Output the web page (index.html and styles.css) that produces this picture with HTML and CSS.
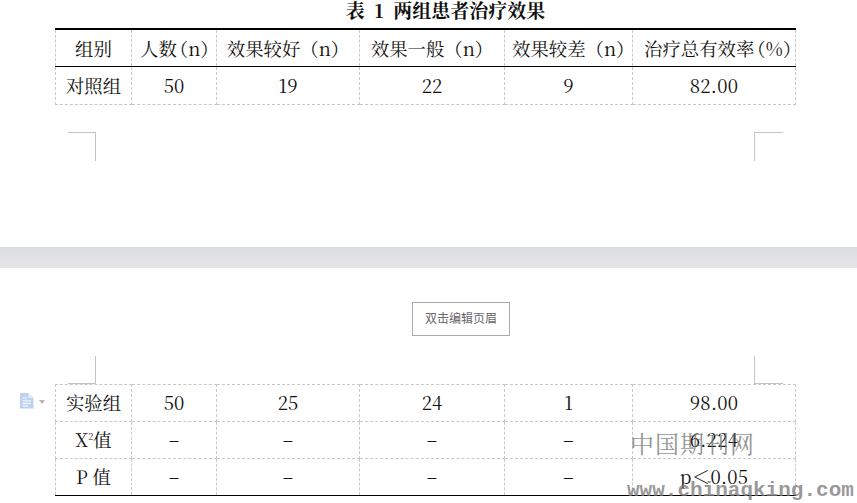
FILE: index.html
```html
<!DOCTYPE html>
<html lang="zh">
<head>
<meta charset="utf-8">
<title>表 1 两组患者治疗效果</title>
<link rel="stylesheet" href="styles.css">
</head>
<body>
<main class="doc">
  <section class="page page-top">
    <h1 class="caption">表 1 两组患者治疗效果</h1>
    <table class="data head-table">
      <colgroup><col class="c1"><col class="c2"><col class="c3"><col class="c4"><col class="c5"><col class="c6"></colgroup>
      <tr class="head-row"><td>组别</td><td class="pad-n">人数<span class="open">（</span>n<span class="close">）</span></td><td>效果较好（n）</td><td>效果一般（n）</td><td class="pad-d">效果较差（n）</td><td class="pad-r">治疗总有效率<span class="open">（</span>%<span class="close">）</span></td></tr>
      <tr class="first-data"><td>对照组</td><td>50</td><td>19</td><td>22</td><td>9</td><td class="num">82.00</td></tr>
    </table>
    <span class="mark tl"></span><span class="mark tr"></span>
  </section>
  <div class="page-gap"></div>
  <section class="page page-bottom">
    <button class="header-btn" type="button"><span class="btn-label">双击编辑页眉</span></button>
    <span class="mark bl"></span><span class="mark br"></span>
    <svg class="doc-icon" width="14" height="16" viewBox="0 0 14 16" aria-hidden="true">
      <path d="M0 0H8L13.500 5V15.500H0Z" fill="#bed1ee"/>
      <path d="M8 0L13.500 5H8Z" fill="#dfe8f7"/>
      <path d="M2.500 5H7M2.500 8H11M2.500 10.500H11M2.500 13H8" stroke="#fff" stroke-width="1.100"/>
    </svg>
    <span class="caret"></span>
    <table class="data body-table">
      <colgroup><col class="c1"><col class="c2"><col class="c3"><col class="c4"><col class="c5"><col class="c6"></colgroup>
      <tr><td>实验组</td><td>50</td><td>25</td><td>24</td><td>1</td><td class="num">98.00</td></tr>
      <tr><td>X<sup>2</sup>值</td><td class="dash">–</td><td class="dash">–</td><td class="dash">–</td><td class="dash">–</td><td class="num">6.224</td></tr>
      <tr class="last-row"><td>P 值</td><td class="dash">–</td><td class="dash">–</td><td class="dash">–</td><td class="dash">–</td><td class="num">p＜0.05</td></tr>
    </table>
    <div class="wm-cn">中国期刊网</div>
    <div class="wm-url">www.chinaqking.com</div>
  </section>
</main>
</body>
</html>
```
FILE: styles.css
```css
html, body { margin: 0; padding: 0; background: #fff; overflow: hidden; }
body { width: 857px; height: 503px; font-family: "Noto Serif CJK SC", "Liberation Serif", "Noto Sans CJK SC", serif; color: #111; }
.doc { display: flex; flex-direction: column; }
.page { position: relative; background: #fff; }
.page-top { height: 247px; padding-left: 55px; box-sizing: border-box; }
.page-bottom { height: 235px; padding-left: 55px; box-sizing: border-box; }
.page-gap { height: 21px; background: linear-gradient(#dbdcde, #e0e1e3 40%, #e6e6e8); }
.caption { margin: 0; width: 741px; padding-left: 40px; box-sizing: border-box; height: 28px; line-height: 19px; font-size: 19px; font-weight: 700; text-align: center; word-spacing: 5px; white-space: pre; }
.data { border-collapse: collapse; table-layout: fixed; width: 740px; font-size: 18.400px; }
.c1 { width: 76px; } .c2 { width: 85px; } .c3 { width: 143px; } .c4 { width: 145px; } .c5 { width: 128px; } .c6 { width: 163px; }
.data td { height: 34px; padding: 0 0 2px; border: 1px dashed #c8c8c8; text-align: center; line-height: 20px; white-space: nowrap; overflow: visible; }
.num { letter-spacing: 0.3px; }
.head-table { border-top: 2px solid #000; }
.head-table .head-row td { border-top: 2px solid #000; border-bottom: 1px solid #000; padding-bottom: 1px; height: 35px; }
.head-table .first-data td { height: 36px; padding-bottom: 1px; }
.head-table .pad-n { padding-left: 8px; }
.head-table .pad-d { padding-left: 7px; }
.head-table .pad-r { padding-left: 11px; }
.open { margin-left: -7px; }
.body-table { position: absolute; left: 55px; top: 116px; }
.last-row td { border-bottom: 1px solid #000; }
.data .dash { padding-bottom: 5px; height: 31px; }
sup { font-size: 9px; line-height: 0; vertical-align: 7px; }
.header-btn { display: block; margin: 34px 0 0 357px; width: 98px; height: 34px; padding: 0 0 3px; border: 1px solid #aaa; background: #fff; color: #666; font: 12px "Noto Sans CJK SC", sans-serif; }
.btn-label { display: block; }
.mark { position: absolute; width: 28px; height: 28px; border: 0 solid #c4c4c4; box-sizing: border-box; }
.tl { left: 68px; top: 132px; height: 29px; border-top-width: 1px; border-right-width: 1px; }
.tr { left: 754px; top: 132px; width: 29px; height: 29px; border-top-width: 1px; border-left-width: 1px; }
.bl { left: 68px; top: 88px; border-bottom-width: 1px; border-right-width: 1px; }
.br { left: 754px; top: 88px; width: 29px; border-bottom-width: 1px; border-left-width: 1px; }
.doc-icon { position: absolute; left: 20px; top: 125px; }
.caret { position: absolute; left: 39px; top: 132px; width: 0; height: 0; border: 3px solid transparent; border-top: 4px solid #b5b5b5; border-bottom: 0; }
.wm-cn { position: absolute; left: 630px; top: 161px; font: 24px/28px "Noto Serif CJK SC", "Noto Sans CJK SC", sans-serif; letter-spacing: 1px; color: rgba(110, 110, 110, 0.75); white-space: nowrap; }
.wm-url { position: absolute; left: 627px; top: 210px; font: 700 21px/26px "Liberation Mono", monospace; color: rgba(125, 125, 125, 0.8); white-space: nowrap; }
```
